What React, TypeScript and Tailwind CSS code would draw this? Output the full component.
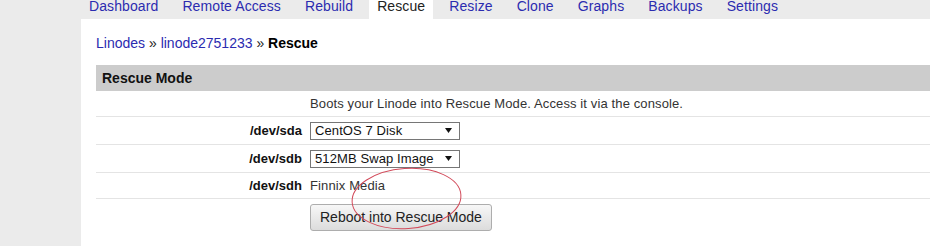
import React from 'react';

const tabs = ['Dashboard', 'Remote Access', 'Rebuild', 'Rescue', 'Resize', 'Clone', 'Graphs', 'Backups', 'Settings'];

function FakeSelect({ value }: { value: string }) {
  return (
    <div className="flex h-[18px] w-[150px] items-center justify-between border border-[#767676] bg-white pl-[4px] pr-[7px] text-[13px] leading-[16px] tracking-[0.1px] text-[#111]">
      <span>{value}</span>
      <svg width="7" height="5" viewBox="0 0 7 5">
        <path d="M0 0 L7 0 L3.5 5 Z" fill="#111" />
      </svg>
    </div>
  );
}

function Row({ label, children, h }: { label?: string; children: React.ReactNode; h: string }) {
  return (
    <div className={`grid grid-cols-[214px_1fr] items-center border-b border-[#e4e4e4] ${h}`}>
      <div className="pr-2 text-right text-[13px] font-bold text-[#111]">{label}</div>
      <div className="text-[13px] tracking-[0.12px] text-[#333]">{children}</div>
    </div>
  );
}

export default function App() {
  return (
    <div className="relative flex h-[246px] w-[930px] overflow-hidden bg-[#ebebeb] font-['Liberation_Sans',Arial,sans-serif]">
      <div className="w-[81px] shrink-0" />
      <div className="flex flex-1 flex-col">
        <nav className="flex h-[19px] gap-2">
          {tabs.map((t) => (
            <div
              key={t}
              className={`h-[19px] px-2 text-[14px] leading-[12px] tracking-[0.1px] ${
                t === 'Rescue' ? 'bg-white text-[#222]' : 'text-[#2b2bb0]'
              }`}
            >
              {t}
            </div>
          ))}
        </nav>
        <main className="flex-1 bg-white pl-[15px] pt-[16px]">
          <div className="text-[14px] leading-[16px] text-[#222]">
            <span className="text-[#2b2bb0]">Linodes</span> »{' '}
            <span className="text-[#2b2bb0]">linode2751233</span> » <span className="font-bold text-black">Rescue</span>
          </div>
          <div className="mt-[14px]">
            <div className="h-[26px] bg-[#cccccc] pl-[6px] text-[14px] font-bold leading-[26px] text-[#111]">Rescue Mode</div>
            <Row h="h-[26px]">
              <span className="leading-[25px]">Boots your Linode into Rescue Mode. Access it via the console.</span>
            </Row>
            <Row label="/dev/sda" h="h-[28px]">
              <FakeSelect value="CentOS 7 Disk" />
            </Row>
            <Row label="/dev/sdb" h="h-[28px]">
              <FakeSelect value="512MB Swap Image" />
            </Row>
            <Row label="/dev/sdh" h="h-[26px]">
              Finnix Media
            </Row>
            <div className="grid grid-cols-[214px_1fr] pt-[5px]">
              <div />
              <div>
                <button className="h-[27px] rounded-[3px] border border-[#adadad] bg-gradient-to-b from-[#f7f7f7] to-[#dcdcdc] px-[9px] text-[14px] leading-[25px] text-[#222]">
                  Reboot into Rescue Mode
                </button>
              </div>
            </div>
          </div>
        </main>
      </div>
      <svg className="pointer-events-none absolute left-0 top-0" width="930" height="246">
        <ellipse cx="406.5" cy="198.5" rx="54.5" ry="30" transform="rotate(-4 406.5 198.5)" fill="none" stroke="#d24a5a" strokeWidth="1" />
      </svg>
    </div>
  );
}
